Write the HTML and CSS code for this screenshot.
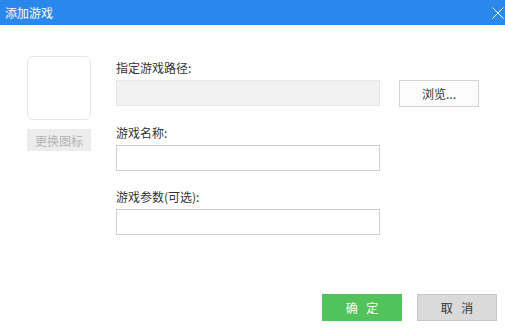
FILE: index.html
```html
<!DOCTYPE html>
<html lang="zh-CN">
<head>
  <meta charset="UTF-8">
  <title>添加游戏</title>
  <link rel="stylesheet" href="styles.css">
</head>
<body>
  <div class="dialog">
    <!-- Title bar -->
    <div class="titlebar">
      <span class="title">添加游戏</span>
      <svg class="close" width="12" height="12" viewBox="0 0 12 12">
        <path d="M0.5 0.5 L11.5 11.5 M11.5 0.5 L0.5 11.5" stroke="#fff" stroke-width="1" fill="none"/>
      </svg>
    </div>

    <!-- Body -->
    <div class="content">
      <div class="icon-col">
        <div class="icon-box"></div>
        <button class="icon-btn">更换图标</button>
      </div>

      <div class="form-col">
        <div class="row">
          <div class="label">指定游戏路径:</div>
          <div class="line">
            <input class="field readonly" type="text" readonly>
            <button class="browse">浏览...</button>
          </div>
        </div>
        <div class="row">
          <div class="label">游戏名称:</div>
          <input class="field" type="text">
        </div>
        <div class="row">
          <div class="label">游戏参数(可选):</div>
          <input class="field" type="text">
        </div>
      </div>
    </div>

    <!-- Footer -->
    <div class="footer">
      <button class="btn ok">确 定</button>
      <button class="btn cancel">取 消</button>
    </div>
  </div>
</body>
</html>
```

FILE: styles.css
```css
body {
  margin: 0;
  padding: 0;
  background: #fff;
  font-family: "Microsoft YaHei", "Noto Sans CJK SC", sans-serif;
  font-size: 12px;
  color: #333;
}

.dialog {
  width: 505px;
  height: 329px;
  display: flex;
  flex-direction: column;
}

.titlebar {
  height: 25px;
  background: #2a88ec;
  display: flex;
  align-items: center;
  justify-content: space-between;
  padding: 0 1px 0 5px;
  flex-shrink: 0;
}

.title {
  color: #fff;
  font-size: 12px;
  line-height: 16px;
}

.close {
  display: block;
}

.content {
  display: flex;
  padding: 31px 0 0 27px;
  gap: 25px;
}

.icon-col {
  display: flex;
  flex-direction: column;
  gap: 9px;
  width: 64px;
}

.icon-box {
  width: 62px;
  height: 62px;
  border: 1px solid #e6e6e6;
  border-radius: 6px;
}

.icon-btn {
  width: 64px;
  height: 22px;
  border: none;
  background: #ececec;
  color: #b3b3b3;
  font-family: inherit;
  font-size: 12px;
  padding: 0;
}

.form-col {
  display: flex;
  flex-direction: column;
  gap: 18px;
  padding-top: 4px;
}

.label {
  line-height: 16px;
  margin-bottom: 4px;
}

.line {
  display: flex;
  gap: 19px;
}

.field {
  display: block;
  box-sizing: border-box;
  width: 264px;
  height: 26px;
  border: 1px solid #cfcfcf;
  background: #fff;
  margin: 0;
  padding: 0 4px;
  outline: none;
}

.field.readonly {
  background: #f2f2f2;
  border-color: #e6e6e6;
}

.browse {
  width: 80px;
  height: 27px;
  border: 1px solid #d2d2d2;
  background: #fcfcfc;
  color: #333;
  font-family: inherit;
  font-size: 12px;
  padding: 0;
}

.footer {
  margin-top: auto;
  display: flex;
  justify-content: flex-end;
  gap: 15px;
  padding: 0 8px 8px 0;
}

.btn {
  width: 80px;
  height: 27px;
  font-family: inherit;
  font-size: 12px;
  word-spacing: 6px;
  padding: 0;
}

.ok {
  background: #51c35a;
  border: 1px solid #51c35a;
  color: #fff;
}

.cancel {
  background: #dadada;
  border: 1px solid #c6c6c6;
  color: #333;
}
```
